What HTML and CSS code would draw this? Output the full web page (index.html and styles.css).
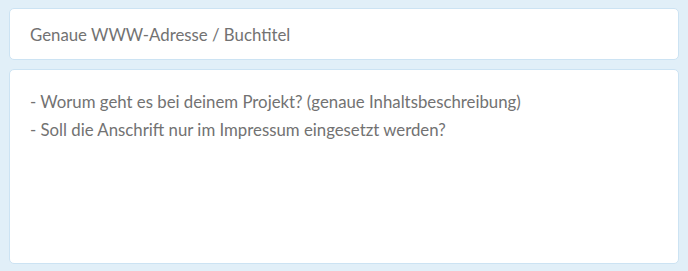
FILE: index.html
```html
<!DOCTYPE html>
<html>

<head>
  <meta name="viewport" content="width=device-width, initial-scale=1">
  <link rel="stylesheet" href="styles.css">
</head>

<body>
  <main class="form">
    <div class="field field--line">Genaue WWW-Adresse / Buchtitel</div>
    <div class="field field--area">
      - Worum geht es bei deinem Projekt? (genaue Inhaltsbeschreibung)<br>
      - Soll die Anschrift nur im Impressum eingesetzt werden?
    </div>
  </main>
</body>

</html>
```

FILE: styles.css
```css
:root {
  --bg: #e1eff8;
  --border: #cce3f3;
  --text: #727272;
}

html,
body {
  margin: 0;
  height: 100%;
}

body {
  background-color: var(--bg);
  font-family: Lato, "Open Sans", sans-serif;
  font-size: 16.8px;
  color: var(--text);
}

.form {
  display: flex;
  flex-direction: column;
  gap: 9px;
  padding: 8px 9px 7px 9px;
}

.field {
  background: #fff;
  border: 1px solid var(--border);
  border-radius: 5px;
  padding: 0 20px;
}

.field--line {
  height: 50px;
  display: flex;
  align-items: center;
}

.field--area {
  box-sizing: border-box;
  height: 195px;
  padding-top: 18px;
  line-height: 28px;
}
```
